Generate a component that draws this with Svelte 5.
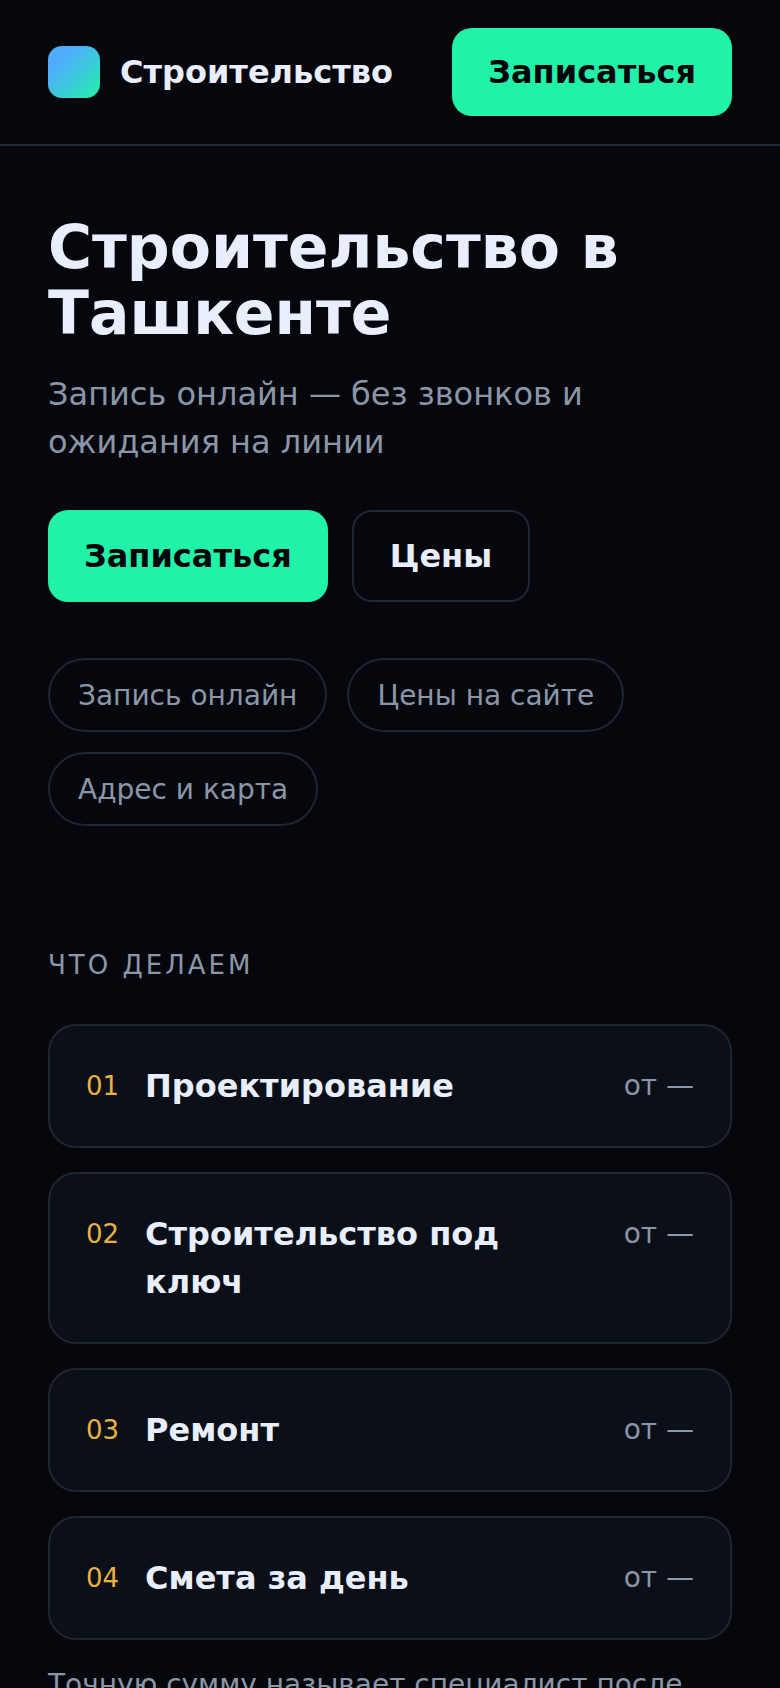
<script>
  const chips = ['Запись онлайн', 'Цены на сайте', 'Адрес и карта'];
  const services = [
    { n: '01', title: 'Проектирование' },
    { n: '02', title: 'Строительство под ключ' },
    { n: '03', title: 'Ремонт' },
    { n: '04', title: 'Смета за день' }
  ];
</script>

<div class="page">
  <header class="top">
    <div class="brand">
      <span class="logo"></span>
      <span class="brand-name">Строительство</span>
    </div>
    <button class="btn primary small">Записаться</button>
  </header>

  <section class="hero">
    <h1>Строительство в Ташкенте</h1>
    <p class="lead">Запись онлайн — без звонков и ожидания на линии</p>
    <div class="actions">
      <button class="btn primary">Записаться</button>
      <button class="btn ghost">Цены</button>
    </div>
    <div class="chips">
      {#each chips as c}
        <span class="chip">{c}</span>
      {/each}
    </div>
  </section>

  <section class="services">
    <h2>ЧТО ДЕЛАЕМ</h2>
    <div class="list">
      {#each services as s}
        <div class="card">
          <span class="num">{s.n}</span>
          <span class="title">{s.title}</span>
          <span class="price">от —</span>
        </div>
      {/each}
    </div>
    <p class="note">Точную сумму называет специалист после осмотра объекта</p>
  </section>
</div>

<style>
  :global(html), :global(body) {
    margin: 0;
    background: #05070d;
    height: 1688px;
    overflow: hidden;
  }
  .page {
    font-family: "DejaVu Sans", sans-serif;
    color: #e8eefc;
    width: 780px;
    height: 1688px;
    overflow: hidden;
    background: #05070d;
  }
  .top {
    display: flex;
    align-items: center;
    justify-content: space-between;
    height: 144px;
    padding: 0 48px;
    border-bottom: 2px solid #1e2632;
  }
  .brand { display: flex; align-items: center; gap: 20px; }
  .logo {
    width: 52px;
    height: 52px;
    border-radius: 14px;
    background: linear-gradient(135deg, #4facfe 25%, #22f2a8);
  }
  .brand-name { font-size: 32px; font-weight: 700; }
  .btn {
    font-family: inherit;
    font-weight: 700;
    font-size: 32px;
    border-radius: 20px;
    box-sizing: border-box;
    height: 92px;
    padding: 0 36px;
    cursor: pointer;
  }
  .primary { background: #22f2a8; color: #03050a; border: 0; }
  .small { height: 88px; }
  .ghost { background: transparent; color: #e8eefc; border: 2px solid #1e2632; }
  .hero { padding: 68px 48px 0; }
  h1 { margin: 0; font-size: 60px; line-height: 66px; font-weight: 700; }
  .lead { margin: 24px 0 0; font-size: 32px; line-height: 48px; color: #8b97a8; }
  .actions { display: flex; gap: 24px; margin-top: 44px; }
  .chips { display: flex; flex-wrap: wrap; gap: 20px; margin-top: 56px; }
  .chip {
    box-sizing: border-box;
    height: 74px;
    padding: 0 28px;
    display: flex;
    align-items: center;
    border: 2px solid #1e2632;
    border-radius: 37px;
    font-size: 28px;
    color: #8b97a8;
  }
  .services { padding: 124px 48px 0; }
  h2 {
    margin: 0;
    font-size: 26px;
    font-weight: 400;
    letter-spacing: 3px;
    color: #8b97a8;
  }
  .list { display: flex; flex-direction: column; gap: 24px; margin-top: 44px; }
  .card {
    display: flex;
    align-items: flex-start;
    padding: 36px;
    border: 2px solid #1e2632;
    border-radius: 28px;
    background: #0b1018;
  }
  .num { width: 59px; flex: none; font-size: 26px; line-height: 48px; color: #e9b044; }
  .title { flex: 1; font-size: 32px; font-weight: 700; line-height: 48px; padding-right: 80px; }
  .price { font-size: 28px; line-height: 48px; color: #8b97a8; white-space: nowrap; }
  .note { margin: 24px 0 0; font-size: 28px; line-height: 42px; color: #8b97a8; }
</style>
